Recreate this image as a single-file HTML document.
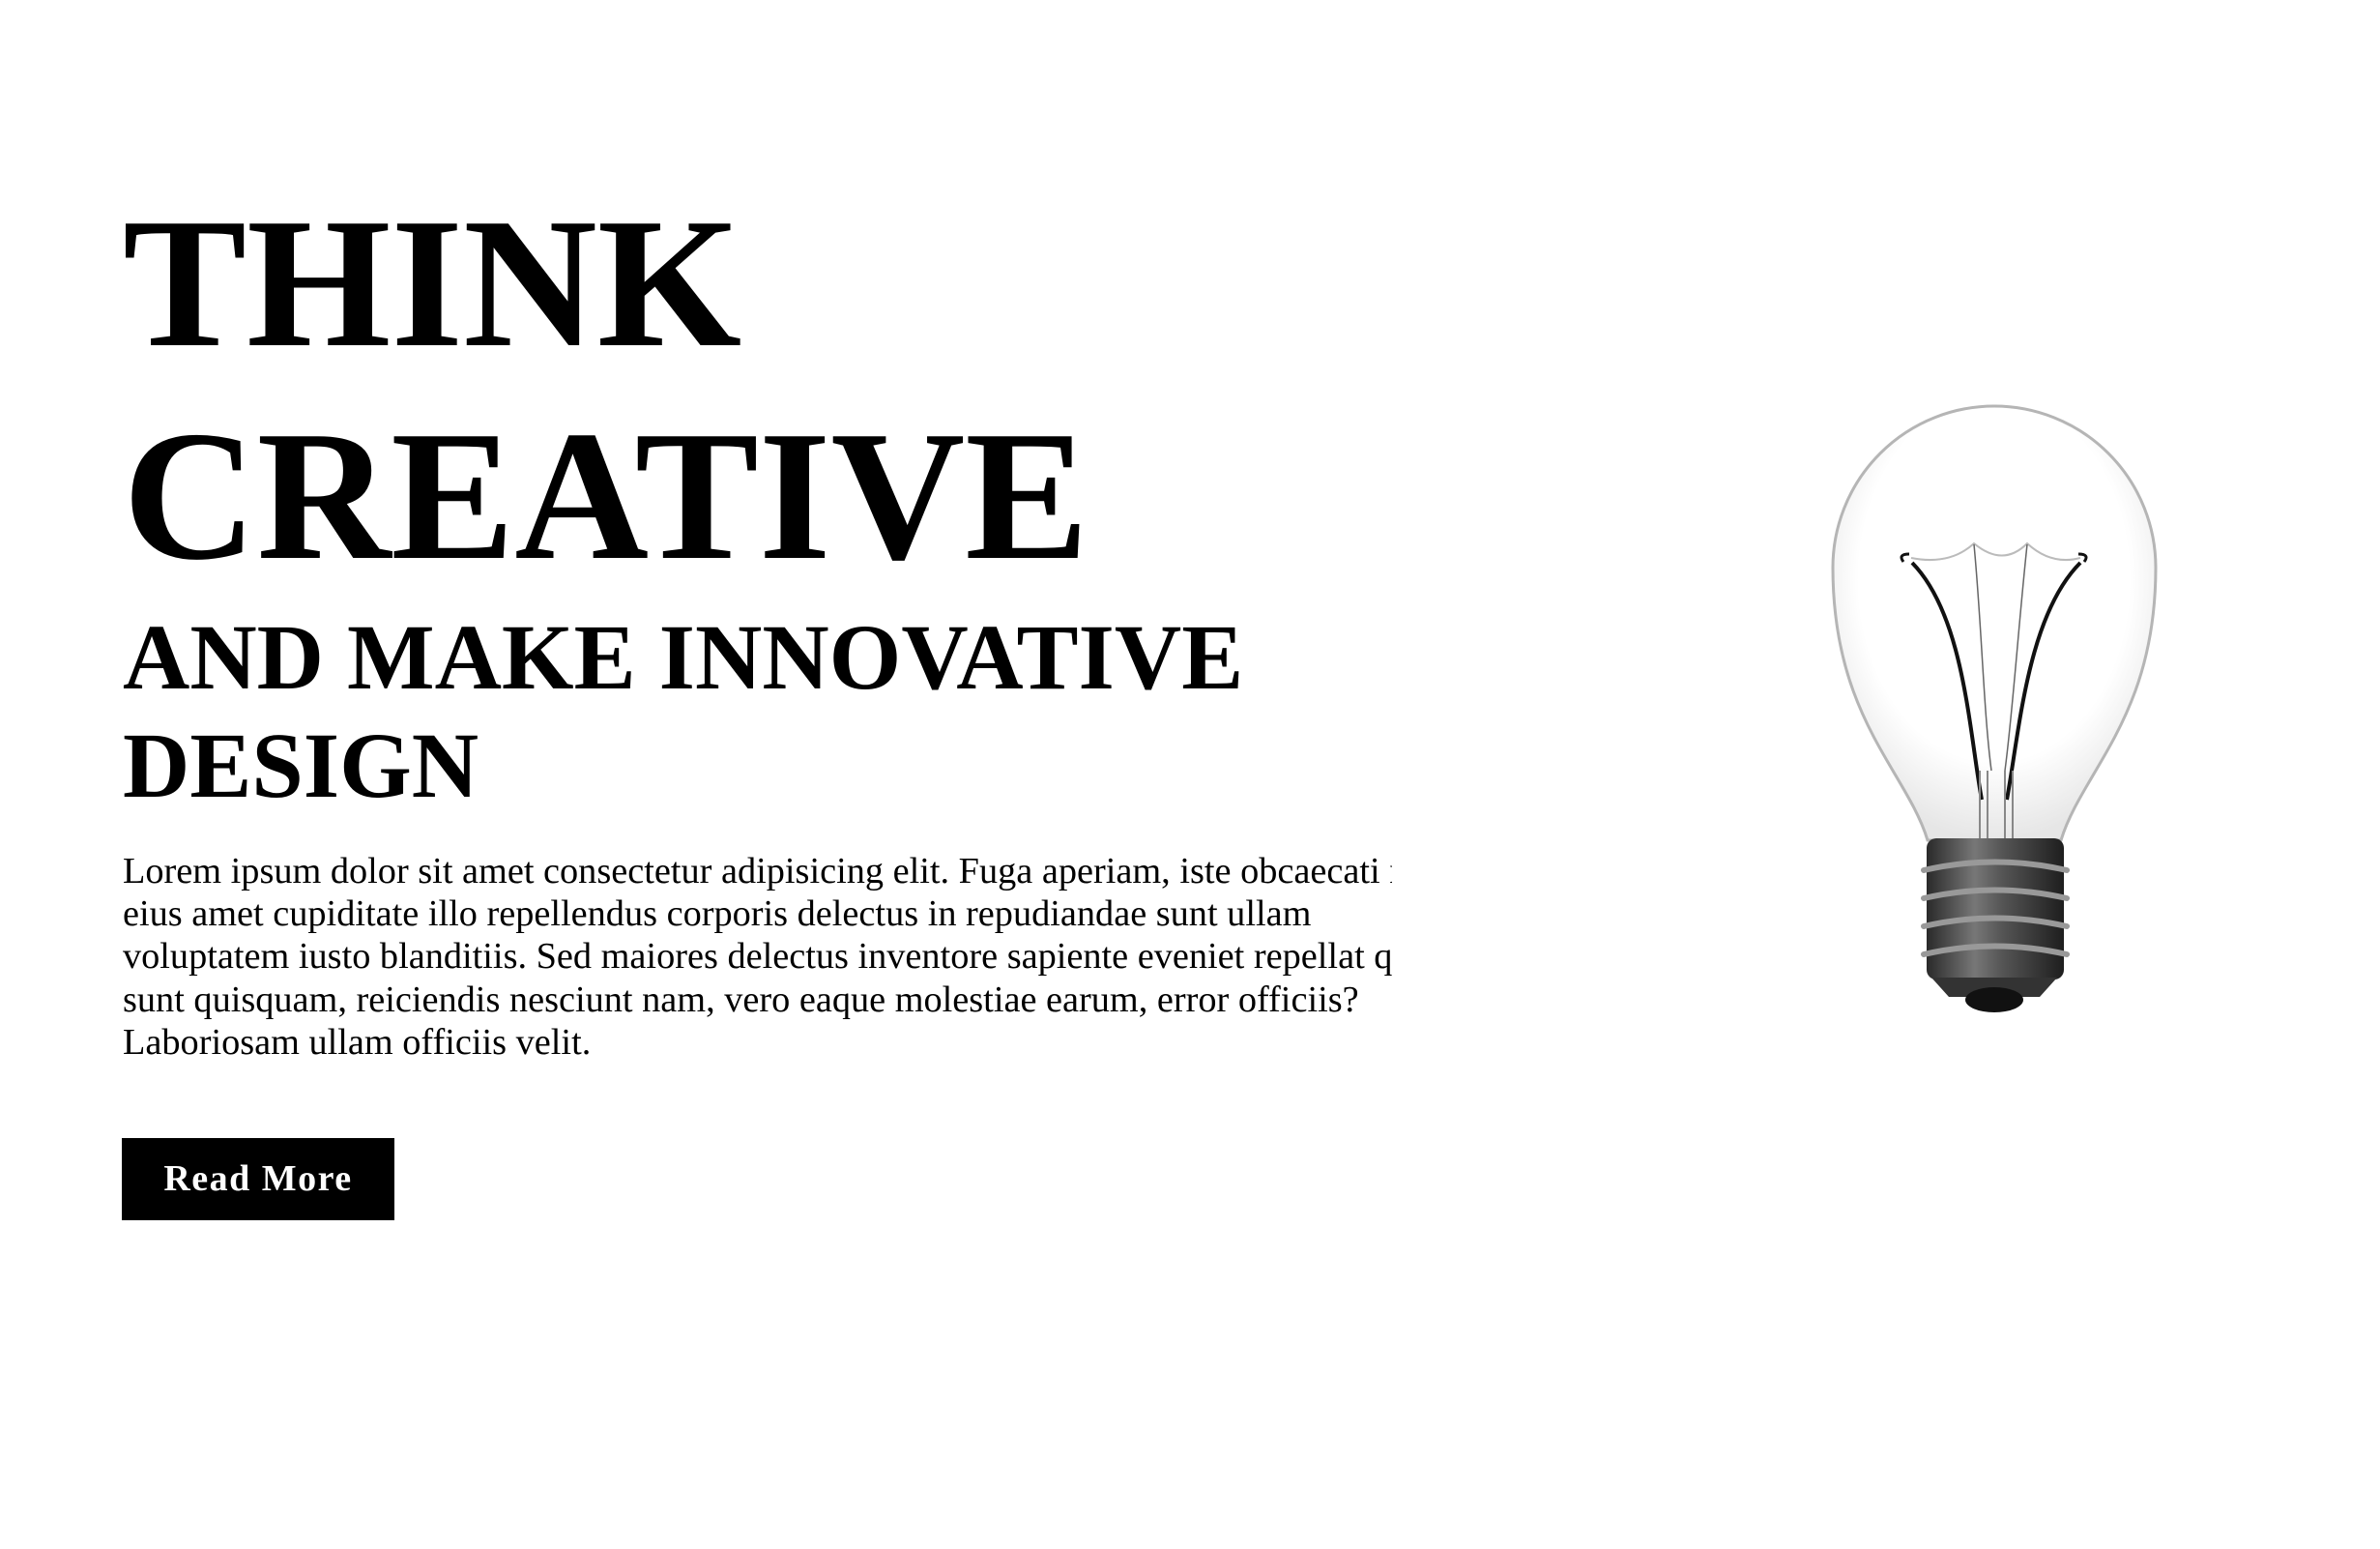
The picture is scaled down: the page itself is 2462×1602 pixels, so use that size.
<!DOCTYPE html>
<html><head><meta charset="utf-8"><style>
html,body{margin:0;padding:0;background:#fff;}
body{width:2462px;height:1602px;position:relative;overflow:hidden;font-family:"Liberation Serif",serif;color:#000;}
.h1{position:absolute;left:127px;top:183px;font-size:192px;line-height:220px;font-weight:bold;margin:0;white-space:nowrap;}
.h2{position:absolute;left:127px;top:624px;font-size:96px;line-height:112px;font-weight:bold;margin:0;white-space:nowrap;}
.p{position:absolute;left:127px;top:879px;width:1313px;overflow:hidden;font-size:38.3px;line-height:44.2px;white-space:nowrap;margin:0;}
.btn{position:absolute;left:126px;top:1177px;width:282px;height:85px;background:#000;color:#fff;font-weight:bold;font-size:38px;line-height:85px;text-align:center;letter-spacing:1.5px;}
svg{position:absolute;left:0;top:0;}
</style></head><body>
<div class="h1">THINK<br>CREATIVE</div>
<div class="h2">AND MAKE INNOVATIVE<br>DESIGN</div>
<div class="p">Lorem ipsum dolor sit amet consectetur adipisicing elit. Fuga aperiam, iste obcaecati numquam<br>eius amet cupiditate illo repellendus corporis delectus in repudiandae sunt ullam<br>voluptatem iusto blanditiis. Sed maiores delectus inventore sapiente eveniet repellat quas<br>sunt quisquam, reiciendis nesciunt nam, vero eaque molestiae earum, error officiis?<br>Laboriosam ullam officiis velit.</div>
<div class="btn">Read More</div>
<svg width="2462" height="1602" viewBox="0 0 2462 1602">
<defs>
<radialGradient id="g" cx="0.5" cy="0.4" r="0.6">
<stop offset="0.7" stop-color="#fff"/><stop offset="1" stop-color="#e6e6e6"/>
</radialGradient>
<linearGradient id="m" x1="0" x2="1">
<stop offset="0" stop-color="#2a2a2a"/><stop offset="0.35" stop-color="#777"/><stop offset="0.55" stop-color="#555"/><stop offset="1" stop-color="#1e1e1e"/>
</linearGradient>
</defs>
<g transform="translate(-18,-3)">
<path d="M2012 872 C1990 800,1914 745,1914 590 A167 167 0 0 1 2248 590 C2248 745,2172 800,2150 872 Z" fill="url(#g)" stroke="#b5b5b5" stroke-width="3"/>
<path d="M1996 585 C2050 640,2055 760,2068 830 M2170 585 C2115 640,2107 760,2094 830" fill="none" stroke="#111" stroke-width="4"/>
<path d="M1987 584 q-6 -8 6 -8 M2174 584 q6 -8 -6 -8" fill="none" stroke="#111" stroke-width="3"/>
<path d="M1995 580 Q2035 588,2060 565 Q2090 590,2115 565 Q2140 588,2170 580" fill="none" stroke="#bbb" stroke-width="2"/>
<path d="M2060 566 C2068 650,2070 740,2078 800 M2115 566 C2106 650,2100 740,2092 800" fill="none" stroke="#666" stroke-width="1.5"/>
<path d="M2066 800 L2066 870 M2100 800 L2100 870 M2074 800 L2074 870 M2092 800 L2092 870" stroke="#888" stroke-width="2"/>
<rect x="2011" y="870" width="142" height="146" rx="10" fill="url(#m)"/>
<g fill="none" stroke="#999" stroke-width="6" stroke-linecap="round">
<path d="M2008 903 Q2081 886,2156 903"/><path d="M2008 932 Q2081 915,2156 932"/><path d="M2008 961 Q2081 944,2156 961"/><path d="M2008 990 Q2081 973,2156 990"/>
</g>
<path d="M2016 1014 L2146 1014 L2128 1034 L2034 1034 Z" fill="#333"/>
<ellipse cx="2081" cy="1037" rx="30" ry="13" fill="#111"/>
</g>
</svg>
</body></html>
